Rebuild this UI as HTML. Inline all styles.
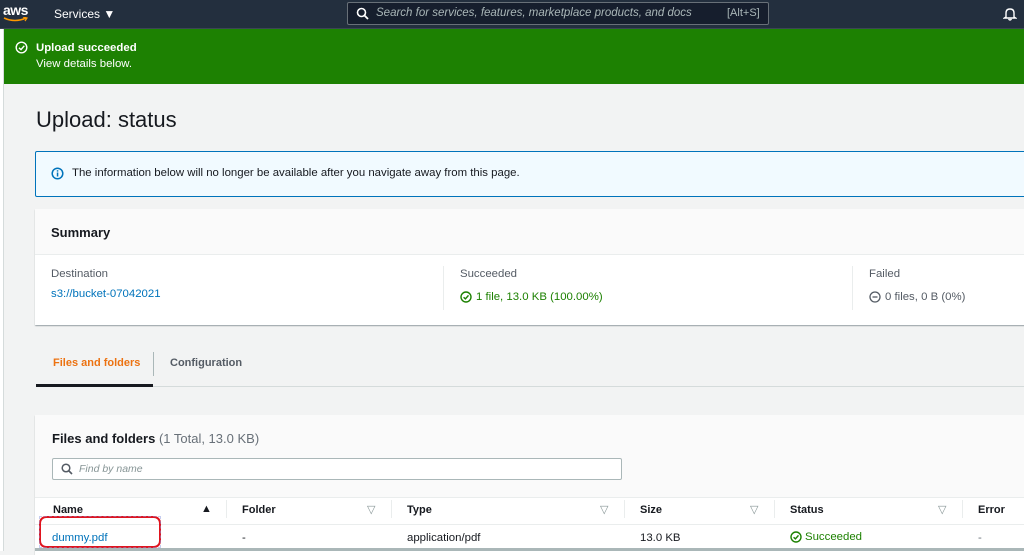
<!DOCTYPE html>
<html><head><meta charset="utf-8"><style>
*{margin:0;padding:0;box-sizing:border-box}
body{width:1024px;height:551px;overflow:hidden;background:#f2f3f3;font-family:"Liberation Sans",sans-serif;font-size:11.4px;color:#16191f;position:relative}
.a{position:absolute}
.nav{left:0;top:0;width:1024px;height:29px;background:#232f3e;border-bottom:1px solid #3b4654}
.strip{left:0;top:29px;width:4px;height:522px;background:#fff;border-right:1px solid #d5dbdb}
.banner{left:4px;top:29px;width:1020px;height:55px;background:#1d8102;color:#fff}
.card{background:#fff;box-shadow:0 1px 1px rgba(0,28,36,.3),1px 1px 1px rgba(0,28,36,.1)}
.lbl{color:#545b64}
.link{color:#0073bb}
.th{top:504px;font-weight:bold;font-size:11px;color:#16191f}
.td{top:532px}
.sep{top:500px;width:1px;height:18px;background:#eaeded}
.tri{top:503px;color:#879596;font-size:11px}
</style></head><body>
<div class="a nav">
 <div class="a" style="left:3px;top:2px;color:#fff;font-size:14px;font-weight:bold;letter-spacing:-0.5px">aws</div>
 <svg class="a" style="left:3px;top:17px" width="26" height="6"><path d="M1 1 Q12 6 23 1" stroke="#ff9900" stroke-width="1.6" fill="none"/><path d="M20 0 L24 1 L22 4" stroke="#ff9900" stroke-width="1.2" fill="none"/></svg>
 <div class="a" style="left:54px;top:7px;color:#fff;font-size:12px">Services ▼</div>
 <div class="a" style="left:347px;top:2px;width:422px;height:23px;border:1px solid #687078;border-radius:2px;background:#161e2d"></div>
 <svg class="a" style="left:356px;top:7px" width="13" height="13"><circle cx="5.5" cy="5.5" r="4" stroke="#fff" stroke-width="1.6" fill="none"/><path d="M8.5 8.5 L12 12" stroke="#fff" stroke-width="1.8"/></svg>
 <div class="a" style="left:376px;top:7px;color:#aab7b8;font-size:11.5px;font-style:italic">Search for services, features, marketplace products, and docs</div>
 <div class="a" style="left:727px;top:7px;color:#aab7b8;font-size:11px">[Alt+S]</div>
 <svg class="a" style="left:1003px;top:7px" width="14" height="14"><path d="M3 10 L3 6 Q3 2 7 2 Q11 2 11 6 L11 10 L12.5 11 L1.5 11 Z M5.5 12 Q7 14 8.5 12" stroke="#fff" stroke-width="1.4" fill="none"/></svg>
</div>
<div class="a strip"></div>
<div class="a banner">
 <svg class="a" style="left:11px;top:12px" width="13" height="13"><circle cx="6.5" cy="6.5" r="5.3" stroke="#fff" stroke-width="1.4" fill="none"/><path d="M4 6.8 L6 8.6 L9.3 4.8" stroke="#fff" stroke-width="1.4" fill="none"/></svg>
 <div class="a" style="left:32px;top:13px;font-weight:bold">Upload succeeded</div>
 <div class="a" style="left:32px;top:29px">View details below.</div>
</div>
<div class="a" style="left:36px;top:107px;font-size:22px;color:#16191f">Upload: status</div>
<div class="a" style="left:35px;top:151px;width:995px;height:46px;background:#f1faff;border:1px solid #0073bb;border-radius:2px"></div>
<svg class="a" style="left:51px;top:167px" width="13" height="13"><circle cx="6.5" cy="6.5" r="5.3" stroke="#0073bb" stroke-width="1.5" fill="none"/><rect x="5.8" y="5.5" width="1.5" height="4" fill="#0073bb"/><rect x="5.8" y="3.2" width="1.5" height="1.4" fill="#0073bb"/></svg>
<div class="a" style="left:72px;top:167px">The information below will no longer be available after you navigate away from this page.</div>
<div class="a card" style="left:35px;top:209px;width:995px;height:116px"></div>
<div class="a" style="left:35px;top:209px;width:995px;height:46px;background:#fafafa;border-bottom:1px solid #eaeded"></div>
<div class="a" style="left:51px;top:225px;font-size:13px;font-weight:bold">Summary</div>
<div class="a lbl" style="left:51px;top:268px">Destination</div>
<div class="a link" style="left:51px;top:288px">s3://bucket-07042021</div>
<div class="a" style="left:443px;top:266px;width:1px;height:44px;background:#eaeded"></div>
<div class="a lbl" style="left:460px;top:268px">Succeeded</div>
<svg class="a" style="left:460px;top:291px" width="12" height="12"><circle cx="6" cy="6" r="5" stroke="#1d8102" stroke-width="1.4" fill="none"/><path d="M3.6 6.2 L5.4 7.9 L8.5 4.4" stroke="#1d8102" stroke-width="1.4" fill="none"/></svg>
<div class="a" style="left:476px;top:291px;color:#1d8102">1 file, 13.0 KB (100.00%)</div>
<div class="a" style="left:852px;top:266px;width:1px;height:44px;background:#eaeded"></div>
<div class="a lbl" style="left:869px;top:268px">Failed</div>
<svg class="a" style="left:869px;top:291px" width="12" height="12"><circle cx="6" cy="6" r="5" stroke="#545b64" stroke-width="1.3" fill="none"/><path d="M3.5 6 L8.5 6" stroke="#545b64" stroke-width="1.3"/></svg>
<div class="a" style="left:885px;top:291px;color:#545b64">0 files, 0 B (0%)</div>
<div class="a" style="left:53px;top:357px;color:#ec7211;font-weight:bold;font-size:11px">Files and folders</div>
<div class="a" style="left:153px;top:352px;width:1px;height:24px;background:#aab7b8"></div>
<div class="a" style="left:170px;top:357px;color:#545b64;font-weight:bold;font-size:11px">Configuration</div>
<div class="a" style="left:36px;top:386px;width:988px;height:1px;background:#d5dbdb"></div>
<div class="a" style="left:36px;top:384px;width:117px;height:3px;background:#16191f"></div>
<div class="a card" style="left:35px;top:415px;width:995px;height:140px"></div>
<div class="a" style="left:35px;top:415px;width:995px;height:83px;background:#fafafa;border-bottom:1px solid #eaeded"></div>
<div class="a" style="left:52px;top:431px;font-size:13px"><b>Files and folders</b> <span style="color:#687078">(1 Total, 13.0 KB)</span></div>
<div class="a" style="left:52px;top:458px;width:570px;height:22px;background:#fff;border:1px solid #aab7b8;border-radius:2px"></div>
<svg class="a" style="left:61px;top:463px" width="12" height="12"><circle cx="5" cy="5" r="3.8" stroke="#545b64" stroke-width="1.5" fill="none"/><path d="M8 8 L11 11" stroke="#545b64" stroke-width="1.6"/></svg>
<div class="a" style="left:79px;top:463px;color:#879596;font-style:italic;font-size:10.5px">Find by name</div>
<div class="a th" style="left:53px">Name</div><div class="a" style="left:201px;top:503px;font-size:11px">▲</div>
<div class="a sep" style="left:226px"></div>
<div class="a th" style="left:242px">Folder</div><div class="a tri" style="left:367px">▽</div>
<div class="a sep" style="left:391px"></div>
<div class="a th" style="left:407px">Type</div><div class="a tri" style="left:600px">▽</div>
<div class="a sep" style="left:624px"></div>
<div class="a th" style="left:640px">Size</div><div class="a tri" style="left:750px">▽</div>
<div class="a sep" style="left:774px"></div>
<div class="a th" style="left:790px">Status</div><div class="a tri" style="left:938px">▽</div>
<div class="a sep" style="left:962px"></div>
<div class="a th" style="left:978px">Error</div>
<div class="a" style="left:35px;top:524px;width:989px;height:1px;background:#eaeded"></div>
<div class="a td link" style="left:52px">dummy.pdf</div>
<div class="a td" style="left:242px">-</div>
<div class="a td" style="left:407px">application/pdf</div>
<div class="a td" style="left:640px">13.0 KB</div>
<svg class="a" style="left:790px;top:531px" width="12" height="12"><circle cx="6" cy="6" r="5" stroke="#1d8102" stroke-width="1.4" fill="none"/><path d="M3.6 6.2 L5.4 7.9 L8.5 4.4" stroke="#1d8102" stroke-width="1.4" fill="none"/></svg>
<div class="a td" style="left:805px;top:531px;color:#1d8102">Succeeded</div>
<div class="a td" style="left:978px;color:#687078">-</div>
<div class="a" style="left:35px;top:548px;width:989px;height:3px;background:#aab7b8"></div>
<div class="a" style="left:39px;top:516px;width:122px;height:32px;border:2px solid #e0141e;border-radius:7px"></div>
<div class="a" style="left:39px;top:516px;width:122px;height:32px;border:1px dashed #8a9ae0;opacity:.5"></div>
</body></html>
